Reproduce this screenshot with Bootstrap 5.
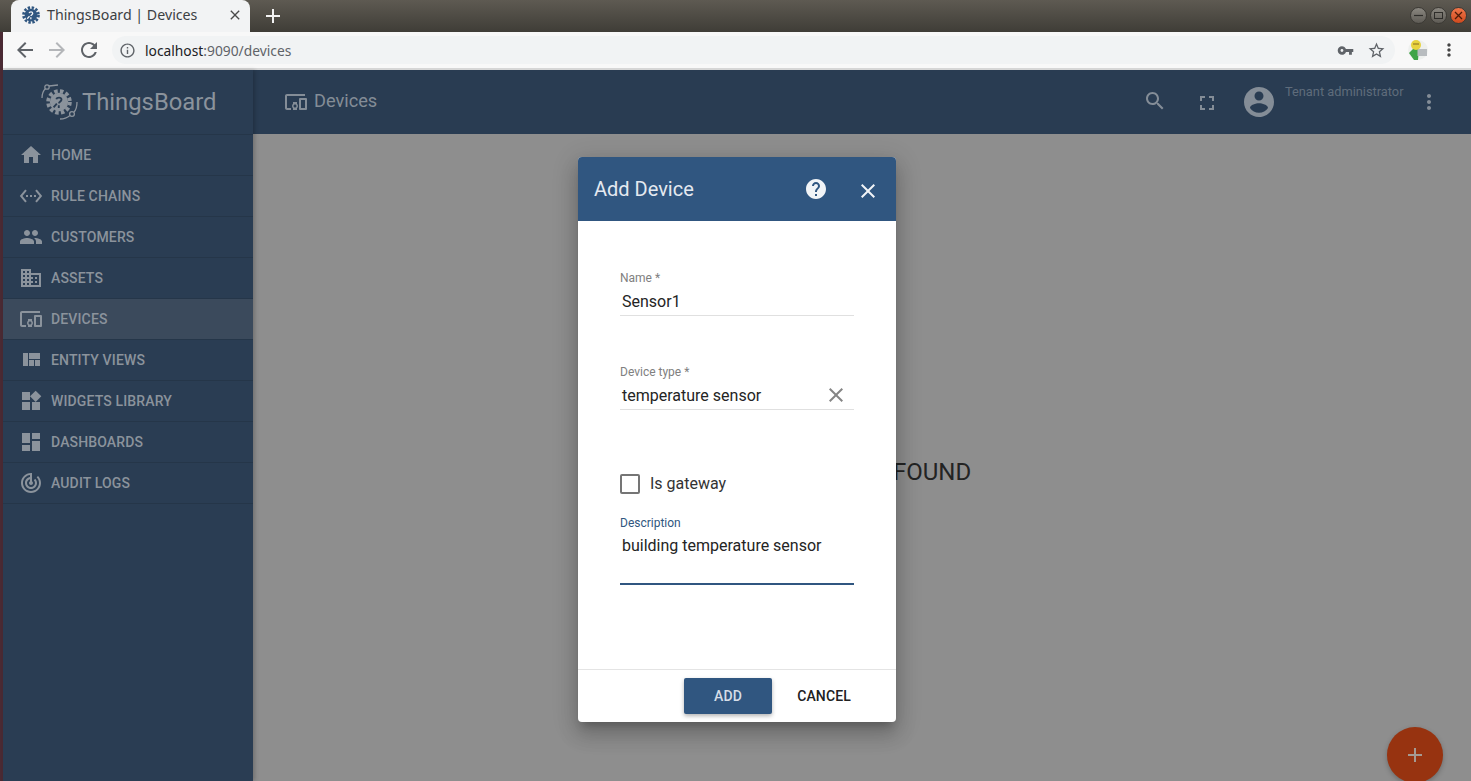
<!doctype html>
<html lang="en">
<head>
  <meta charset="utf-8">
  <title>ThingsBoard | Devices</title>
  <link href="https://cdn.jsdelivr.net/npm/bootstrap@5.3.0/dist/css/bootstrap.min.css" rel="stylesheet">
  <style>
    html, body { height: 100%; overflow: hidden; }
    body { background: #4a2a33; padding-left: 3px; font-family: Roboto, sans-serif; color: #212121; }
    .ico { width: 24px; height: 24px; fill: currentColor; flex: none; display: block; }

    /* browser chrome */
    .win-bar { height: 32px; margin-left: -3px; padding-left: 11px; background: linear-gradient(#5e5a52, #3f3d37); }
    .win-tab { width: 239px; height: 32px; padding: 0 7px 3px 11px; background: #f2f3f4; border-radius: 8px 8px 0 0; font: 14.2px "Noto Sans", sans-serif; color: #3c4043; --cut: #f2f3f4; }
    .win-tab .tab-title { width: 160px; margin-left: 7px; white-space: nowrap; }
    .win-plus { width: 24px; height: 24px; margin-left: 11px; color: #f2f2f2; }
    .win-btn { width: 17px; height: 17px; border-radius: 50%; margin-left: 3px; background: linear-gradient(#8a8780, #5e5b55); border: 1px solid #3b3934; color: #2e2d2a; }
    .win-btn.is-close { background: linear-gradient(#f0764a, #cf4a1e); }
    .win-ctrls { margin-right: 4px; padding-bottom: 2px; }
    .tool-bar { height: 38px; background: #f8f8f8; border-bottom: 2px solid #d6d6d6; color: #5f6368; }
    .tool-btn { width: 24px; height: 24px; margin-left: 8px; }
    .tool-btn:first-child { margin-left: 10px; }
    .omni { width: 1283px; height: 28px; margin-left: 11px; padding: 0 8px 0 7px; background: #f1f3f4; border-radius: 14px; font: 13.8px "Noto Sans", sans-serif; color: #5f6368; }
    .omni b { font-weight: 400; color: #202124; }
    .tool-ext { width: 20px; height: 20px; margin-left: 13px; }

    /* app */
    .app-wrap { height: 711px; }
    .side-col { width: 250px; background: #2a3d53; color: #8b939c; box-shadow: 2px 0 4px rgba(0,0,0,.2); z-index: 2; }
    .side-brand { height: 65px; font-size: 23.8px; color: #8b939c; padding-left: 36px; border-bottom: 1px solid #253649; --cut: #2a3d53; }
    .side-brand svg { width: 42px; height: 42px; margin-right: 1px; margin-top: -2px; }
    .side-brand span { margin-top: 1px; }
    .side-item { height: 41px; padding-left: 16px; border-bottom: 1px solid #253649; font-size: 14px; font-weight: 500; letter-spacing: .14px; gap: 8px; }
    .side-item.is-on { background: #3b4a5c; }
    .top-bar { height: 64px; background: #293c52; color: #848d97; padding-left: 31px; }
    .top-title { font-size: 18.2px; margin-left: 6px; margin-top: -2px; }
    .top-user { font-size: 12.8px; color: #5f6c7b; width: 132px; margin-left: 8px; padding-bottom: 21px; }
    .main-area { background: #8e8e8e; height: 647px; }
    .empty-text { font-size: 24px; color: #232323; padding-top: 320px; }
    .add-fab { right: 28px; bottom: -2px; width: 56px; height: 56px; background: #973310; color: #a59a92; box-shadow: 0 2px 5px rgba(0,0,0,.25); }

    /* dialog */
    .dlg-layer { top: 0; left: 0; right: 0; bottom: 0; z-index: 5; padding-top: 87px; }
    .dlg-box { width: 318px; height: 565px; border: 0; border-radius: 4px; overflow: hidden; box-shadow: 0 7px 8px -4px rgba(0,0,0,.2), 0 13px 19px 2px rgba(0,0,0,.14), 0 5px 24px 4px rgba(0,0,0,.12); }
    .dlg-head { height: 64px; padding: 0 16px; background: #305680; color: #e4e9f0; font-size: 20px; border: 0; border-radius: 0; }
    .dlg-head .ico { color: #f1f4f7; }
    .dlg-form { padding: 50px 42px 0; }
    .fld { height: 45px; border-bottom: 1px solid #e0e0e0; margin-bottom: 49px; }
    .fld-label { font-size: 12px; line-height: 14px; color: #808080; }
    .fld-value { font-size: 16px; line-height: 20px; padding: 7px 2px 0; color: #242424; }
    .fld-value.has-clear { padding-top: 6px; }
    .fld-clear { color: #858585; margin-right: 4px; margin-top: -2px; }
    .gate-row { height: 20px; margin-bottom: 22px; gap: 10px; font-size: 16px; color: #333; }
    .fld-last { margin-bottom: 64px; }
    .gate-box { width: 20px; height: 20px; border: 2px solid #757575; border-radius: 2px; }
    .desc-fld { height: 69px; border-bottom: 2px solid #305680; }
    .desc-fld .fld-label { color: #305680; }
    .desc-fld .fld-value { padding-top: 6px; }
    .dlg-foot { height: 53px; padding: 0 45px 0 0; border-top: 1px solid #e4e4e4; border-radius: 0; }
    .btn-add { width: 88px; height: 36px; padding: 0; margin: 0 25px 0 0; background: #305680; color: #d5dde7; border: 0; border-radius: 2px; font-size: 14px; font-weight: 500; letter-spacing: .15px; box-shadow: 0 2px 4px rgba(0,0,0,.3); }
    .btn-cancel { padding: 0; margin: 0; border: 0; font-size: 14px; font-weight: 500; letter-spacing: .15px; color: #212121; }
  </style>
</head>
<body>
  <svg width="0" height="0" class="position-absolute">
    <symbol id="i-home" viewBox="0 0 24 24"><path d="M10 20v-6h4v6h5v-8h3L12 3 2 12h3v8z"/></symbol>
    <symbol id="i-rule" viewBox="0 0 24 24"><path d="M7.77 6.76L6.23 5.48.82 12l5.41 6.52 1.54-1.28L3.42 12l4.35-5.24zM7 13h2v-2H7v2zm10-2h-2v2h2v-2zm-6 2h2v-2h-2v2zm6.77-7.52l-1.54 1.28L20.58 12l-4.35 5.24 1.54 1.28L23.18 12l-5.41-6.52z"/></symbol>
    <symbol id="i-people" viewBox="0 0 24 24"><path d="M16 11c1.66 0 2.99-1.34 2.99-3S17.66 5 16 5c-1.66 0-3 1.34-3 3s1.34 3 3 3zm-8 0c1.66 0 2.99-1.34 2.99-3S9.66 5 8 5C6.34 5 5 6.34 5 8s1.34 3 3 3zm0 2c-2.33 0-7 1.17-7 3.5V19h14v-2.5c0-2.33-4.67-3.5-7-3.5zm8 0c-.29 0-.62.02-.97.05 1.16.84 1.97 1.97 1.97 3.45V19h6v-2.5c0-2.33-4.67-3.5-7-3.5z"/></symbol>
    <symbol id="i-domain" viewBox="0 0 24 24"><path d="M12 7V3H2v18h20V7H12zM6 19H4v-2h2v2zm0-4H4v-2h2v2zm0-4H4V9h2v2zm0-4H4V5h2v2zm4 12H8v-2h2v2zm0-4H8v-2h2v2zm0-4H8V9h2v2zm0-4H8V5h2v2zm10 12h-8v-2h2v-2h-2v-2h2v-2h-2V9h8v10zm-2-8h-2v2h2v-2zm0 4h-2v2h2v-2z"/></symbol>
    <symbol id="i-devices" viewBox="0 0 24 24"><path d="M3 6h18V4H3c-1.1 0-2 .9-2 2v12c0 1.1.9 2 2 2h4v-2H3V6zm10 6H9v1.78c-.61.55-1 1.33-1 2.22s.39 1.67 1 2.22V20h4v-1.78c.61-.55 1-1.34 1-2.22s-.39-1.67-1-2.22V12zm-2 5.5c-.83 0-1.5-.67-1.5-1.5s.67-1.5 1.5-1.5 1.5.67 1.5 1.5-.67 1.5-1.5 1.5zM22 8h-6c-.5 0-1 .5-1 1v10c0 .5.5 1 1 1h6c.5 0 1-.5 1-1V9c0-.5-.5-1-1-1zm-1 10h-4v-8h4v8z"/></symbol>
    <symbol id="i-quilt" viewBox="0 0 24 24"><path d="M10 18h5v-6h-5v6zm-6 0h5V5H4v13zm12 0h5v-6h-5v6zM10 5v6h11V5H10z"/></symbol>
    <symbol id="i-widgets" viewBox="0 0 24 24"><path d="M13 13v8h8v-8h-8zM3 21h8v-8H3v8zM3 3v8h8V3H3zm13.66-1.31L11 7.34 16.66 13l5.66-5.66-5.66-5.65z"/></symbol>
    <symbol id="i-dash" viewBox="0 0 24 24"><path d="M3 13h8V3H3v10zm0 8h8v-6H3v6zm10 0h8V11h-8v10zm0-18v6h8V3h-8z"/></symbol>
    <symbol id="i-track" viewBox="0 0 24 24"><path d="M19.07 4.93l-1.41 1.41C19.1 7.79 20 9.79 20 12c0 4.42-3.58 8-8 8s-8-3.58-8-8c0-4.08 3.05-7.44 7-7.93v2.02C8.16 6.57 6 9.03 6 12c0 3.31 2.69 6 6 6s6-2.69 6-6c0-1.66-.67-3.16-1.76-4.24l-1.41 1.41C15.55 9.9 16 10.9 16 12c0 2.21-1.79 4-4 4s-4-1.79-4-4c0-1.86 1.28-3.41 3-3.86v2.14c-.6.35-1 .98-1 1.72 0 1.1.9 2 2 2s2-.9 2-2c0-.74-.4-1.38-1-1.72V2h-1C6.48 2 2 6.48 2 12s4.48 10 10 10 10-4.48 10-10c0-2.76-1.12-5.26-2.93-7.07z"/></symbol>
    <symbol id="i-search" viewBox="0 0 24 24"><path d="M15.5 14h-.79l-.28-.27C15.41 12.59 16 11.11 16 9.5 16 5.91 13.09 3 9.5 3S3 5.91 3 9.5 5.91 16 9.5 16c1.61 0 3.09-.59 4.23-1.57l.27.28v.79l5 4.99L20.49 19l-4.99-5zm-6 0C7.01 14 5 11.99 5 9.5S7.01 5 9.5 5 14 7.01 14 9.5 11.99 14 9.5 14z"/></symbol>
    <symbol id="i-full" viewBox="0 0 24 24"><path d="M7 14H5v5h5v-2H7v-3zm-2-4h2V7h3V5H5v5zm12 7h-3v2h5v-5h-2v3zM14 5v2h3v3h2V5h-5z"/></symbol>
    <symbol id="i-account" viewBox="0 0 24 24"><path d="M12 2C6.48 2 2 6.48 2 12s4.48 10 10 10 10-4.48 10-10S17.52 2 12 2zm0 3c1.66 0 3 1.34 3 3s-1.34 3-3 3-3-1.34-3-3 1.34-3 3-3zm0 14.2c-2.5 0-4.71-1.28-6-3.22.03-1.99 4-3.08 6-3.08 1.99 0 5.97 1.09 6 3.08-1.29 1.94-3.5 3.22-6 3.22z"/></symbol>
    <symbol id="i-more" viewBox="0 0 24 24"><path d="M12 8c1.1 0 2-.9 2-2s-.9-2-2-2-2 .9-2 2 .9 2 2 2zm0 2c-1.1 0-2 .9-2 2s.9 2 2 2 2-.9 2-2-.9-2-2-2zm0 6c-1.1 0-2 .9-2 2s.9 2 2 2 2-.9 2-2-.9-2-2-2z"/></symbol>
    <symbol id="i-help" viewBox="0 0 24 24"><path d="M12 2C6.48 2 2 6.48 2 12s4.48 10 10 10 10-4.48 10-10S17.52 2 12 2zm1 17h-2v-2h2v2zm2.07-7.75l-.9.92C13.45 12.9 13 13.5 13 15h-2v-.5c0-1.1.45-2.1 1.17-2.83l1.24-1.26c.37-.36.59-.86.59-1.41 0-1.1-.9-2-2-2s-2 .9-2 2H8c0-2.21 1.79-4 4-4s4 1.79 4 4c0 .88-.36 1.68-.93 2.25z"/></symbol>
    <symbol id="i-close" viewBox="0 0 24 24"><path d="M19 6.41L17.59 5 12 10.59 6.41 5 5 6.41 10.59 12 5 17.59 6.41 19 12 13.41 17.59 19 19 17.59 13.41 12z"/></symbol>
    <symbol id="i-plus" viewBox="0 0 24 24"><path d="M19 13h-6v6h-2v-6H5v-2h6V5h2v6h6v2z"/></symbol>
    <symbol id="i-back" viewBox="0 0 24 24"><path d="M20 11H7.83l5.59-5.59L12 4l-8 8 8 8 1.41-1.41L7.83 13H20v-2z"/></symbol>
    <symbol id="i-refresh" viewBox="0 0 24 24"><path d="M17.65 6.35C16.2 4.9 14.21 4 12 4c-4.42 0-7.99 3.58-7.99 8s3.57 8 7.99 8c3.73 0 6.84-2.55 7.73-6h-2.08c-.82 2.33-3.04 4-5.65 4-3.31 0-6-2.69-6-6s2.69-6 6-6c1.66 0 3.14.69 4.22 1.78L13 11h7V4l-2.35 2.35z"/></symbol>
    <symbol id="i-info" viewBox="0 0 24 24"><path d="M11 7h2v2h-2zm0 4h2v6h-2zm1-9C6.48 2 2 6.48 2 12s4.48 10 10 10 10-4.48 10-10S17.52 2 12 2zm0 18c-4.41 0-8-3.59-8-8s3.59-8 8-8 8 3.59 8 8-3.59 8-8 8z"/></symbol>
    <symbol id="i-key" viewBox="0 0 24 24"><path d="M12.65 10C11.83 7.67 9.61 6 7 6c-3.31 0-6 2.69-6 6s2.69 6 6 6c2.61 0 4.83-1.67 5.65-4H17v4h4v-4h2v-4H12.65zM7 14c-1.1 0-2-.9-2-2s.9-2 2-2 2 .9 2 2-.9 2-2 2z"/></symbol>
    <symbol id="i-star" viewBox="0 0 24 24"><path d="M22 9.24l-7.19-.62L12 2 9.19 8.63 2 9.24l5.46 4.73L5.82 21 12 17.27 18.18 21l-1.63-7.03L22 9.24zM12 15.4l-3.76 2.27 1-4.28-3.32-2.88 4.38-.38L12 6.1l1.71 4.04 4.38.38-3.32 2.88 1 4.28L12 15.4z"/></symbol>
    <symbol id="i-gear" viewBox="0 0 24 24">
      <circle cx="12" cy="12" r="8.5" fill="currentColor"/>
      <circle cx="12" cy="12" r="10" fill="none" stroke="currentColor" stroke-width="3.6" stroke-dasharray="3.2 2.1"/>
      <path d="M9.5 9.5c.5-2 4.6-2.2 4.8.2.1 1.6-2.2 2-2.4 3.6M11.8 15v2.5M7 17l3-3.5" fill="none" stroke="var(--cut, #fff)" stroke-width="1.7"/>
    </symbol>
  </svg>

  <!-- browser chrome -->
  <div class="win-bar d-flex align-items-end">
    <div class="win-tab d-flex align-items-center">
      <svg class="ico" style="width:18px;height:18px;color:#305680"><use href="#i-gear"/></svg>
      <span class="tab-title">ThingsBoard | Devices</span>
      <svg class="ico ms-auto" style="width:16px;height:16px;color:#4a4a4a"><use href="#i-close"/></svg>
    </div>
    <svg class="ico win-plus align-self-center"><use href="#i-plus"/></svg>
    <div class="win-ctrls d-flex align-self-center ms-auto">
      <div class="win-btn d-flex align-items-center justify-content-center"><svg width="9" height="9"><path d="M0 4.5h9" stroke="currentColor" stroke-width="1.2"/></svg></div>
      <div class="win-btn d-flex align-items-center justify-content-center"><svg width="9" height="9"><rect x=".5" y="1.5" width="8" height="6" fill="none" stroke="currentColor"/></svg></div>
      <div class="win-btn is-close d-flex align-items-center justify-content-center"><svg width="9" height="9"><path d="M1 1l7 7M8 1l-7 7" stroke="#4d1b08" stroke-width="1.3"/></svg></div>
    </div>
  </div>
  <div class="tool-bar d-flex align-items-center">
    <svg class="ico tool-btn"><use href="#i-back"/></svg>
    <svg class="ico tool-btn" style="color:#b4b6b9;transform:scaleX(-1)"><use href="#i-back"/></svg>
    <svg class="ico tool-btn"><use href="#i-refresh"/></svg>
    <div class="omni d-flex align-items-center">
      <svg class="ico" style="width:17px;height:17px;margin-right:9px"><use href="#i-info"/></svg>
      <span><b>localhost</b>:9090/devices</span>
      <svg class="ico ms-auto" style="width:17px;height:17px"><use href="#i-key"/></svg>
      <svg class="ico" style="width:19px;height:19px;margin-left:13px;margin-right:1px"><use href="#i-star"/></svg>
    </div>
    <svg class="tool-ext" viewBox="0 0 20 20">
      <circle cx="10" cy="10" r="10" fill="#eef0ee"/>
      <path d="M1 13l5-5 5 1-1 11H6z" fill="#3fa447"/>
      <rect x="9.5" y="9" width="9.5" height="7" fill="#b8bcbf"/>
      <circle cx="8" cy="5" r="5" fill="#e8d33f"/>
      <path d="M5 4h6" stroke="#8a6a20" stroke-width="1"/>
    </svg>
    <svg class="ico" style="width:20px;height:20px;margin-left:11px;color:#444"><use href="#i-more"/></svg>
  </div>

  <!-- app -->
  <div class="app-wrap d-flex position-relative">
    <nav class="side-col d-flex flex-column">
      <div class="side-brand d-flex align-items-center">
        <svg viewBox="0 0 42 42" fill="none" stroke="#8b939c" stroke-width="1.3">
          <use href="#i-gear" x="7" y="9" width="26" height="26" stroke="none" style="color:#8b939c"/>
          <path d="M3 18C3 13 5 10 6.5 8.5M10 6l9-1M38 22c0 5-1 8-3 10M31 35.5C28 38 24 39 21 39"/>
          <circle cx="8" cy="7" r="2.2"/><circle cx="33" cy="34" r="2.4"/>
        </svg>
        <span>ThingsBoard</span>
      </div>
      <div class="side-item d-flex align-items-center"><svg class="ico"><use href="#i-home"/></svg>HOME</div>
      <div class="side-item d-flex align-items-center"><svg class="ico"><use href="#i-rule"/></svg>RULE CHAINS</div>
      <div class="side-item d-flex align-items-center"><svg class="ico"><use href="#i-people"/></svg>CUSTOMERS</div>
      <div class="side-item d-flex align-items-center"><svg class="ico"><use href="#i-domain"/></svg>ASSETS</div>
      <div class="side-item is-on d-flex align-items-center"><svg class="ico"><use href="#i-devices"/></svg>DEVICES</div>
      <div class="side-item d-flex align-items-center"><svg class="ico"><use href="#i-quilt"/></svg>ENTITY VIEWS</div>
      <div class="side-item d-flex align-items-center"><svg class="ico"><use href="#i-widgets"/></svg>WIDGETS LIBRARY</div>
      <div class="side-item d-flex align-items-center"><svg class="ico"><use href="#i-dash"/></svg>DASHBOARDS</div>
      <div class="side-item d-flex align-items-center"><svg class="ico"><use href="#i-track"/></svg>AUDIT LOGS</div>
    </nav>
    <div class="flex-grow-1 d-flex flex-column">
      <header class="top-bar d-flex align-items-center">
        <svg class="ico"><use href="#i-devices"/></svg>
        <span class="top-title">Devices</span>
        <svg class="ico ms-auto" style="margin-right:28px;margin-top:-2px"><use href="#i-search"/></svg>
        <svg class="ico" style="margin-right:22px;margin-top:2px"><use href="#i-full"/></svg>
        <svg class="ico" style="width:36px;height:36px"><use href="#i-account"/></svg>
        <span class="top-user">Tenant administrator</span>
        <svg class="ico" style="margin-right:30px"><use href="#i-more"/></svg>
      </header>
      <main class="main-area position-relative text-center">
        <div class="empty-text">NO DEVICES FOUND</div>
        <div class="add-fab position-absolute rounded-circle d-flex align-items-center justify-content-center">
          <svg class="ico"><use href="#i-plus"/></svg>
        </div>
      </main>
    </div>

    <!-- dialog -->
    <div class="dlg-layer position-absolute d-flex justify-content-center align-items-start">
      <div class="modal-content dlg-box d-flex flex-column bg-white">
        <div class="modal-header dlg-head d-flex align-items-center">
          <span>Add Device</span>
          <svg class="ico ms-auto" style="margin-right:28px;margin-top:-1px"><use href="#i-help"/></svg>
          <svg class="ico" style="margin-top:3px"><use href="#i-close"/></svg>
        </div>
        <div class="dlg-form flex-grow-1">
          <div class="fld">
            <div class="fld-label">Name *</div>
            <div class="fld-value">Sensor1</div>
          </div>
          <div class="fld fld-last">
            <div class="fld-label">Device type *</div>
            <div class="fld-value has-clear d-flex justify-content-between align-items-center">
              <span>temperature sensor</span>
              <svg class="ico fld-clear"><use href="#i-close"/></svg>
            </div>
          </div>
          <div class="gate-row d-flex align-items-center">
            <span class="gate-box d-block"></span>
            <span>Is gateway</span>
          </div>
          <div class="desc-fld">
            <div class="fld-label">Description</div>
            <div class="fld-value">building temperature sensor</div>
          </div>
        </div>
        <div class="modal-footer dlg-foot d-flex justify-content-end align-items-center">
          <button type="button" class="btn btn-add">ADD</button>
          <button type="button" class="btn btn-cancel">CANCEL</button>
        </div>
      </div>
    </div>
  </div>
  <script src="https://cdn.jsdelivr.net/npm/bootstrap@5.3.0/dist/js/bootstrap.bundle.min.js"></script>
</body>
</html>
